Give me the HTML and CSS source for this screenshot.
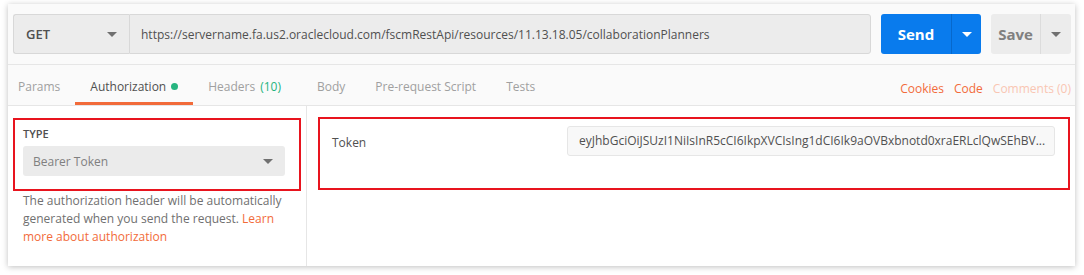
FILE: index.html
```html
<!DOCTYPE html>
<html lang="en">
<head>
  <meta charset="UTF-8" />
  <title>Request - Authorization</title>
  <link rel="stylesheet" href="styles.css">
</head>
<body>
  <div class="window">
    <div class="request-bar">
      <div class="method">
        <span>GET</span>
        <span class="caret"></span>
      </div>
      <div class="url">https://servername.fa.us2.oraclecloud.com/fscmRestApi/resources/11.13.18.05/collaborationPlanners</div>
      <div class="btn-group send">
        <span class="btn-label">Send</span>
        <span class="btn-caret"><span class="caret"></span></span>
      </div>
      <div class="btn-group save">
        <span class="btn-label">Save</span>
        <span class="btn-caret"><span class="caret"></span></span>
      </div>
    </div>

    <div class="tabs">
      <div class="tab">Params</div>
      <div class="tab active">Authorization <span class="dot"></span></div>
      <div class="tab headers">Headers <span class="count">(10)</span></div>
      <div class="tab">Body</div>
      <div class="tab">Pre-request Script</div>
      <div class="tab">Tests</div>
      <div class="tab-links">
        <span>Cookies</span>
        <span>Code</span>
        <span class="faded">Comments (0)</span>
      </div>
    </div>

    <div class="content">
      <div class="auth-left">
        <div class="highlight type-box">
          <div class="label">TYPE</div>
          <div class="select">
            <span>Bearer Token</span>
            <span class="caret"></span>
          </div>
        </div>
        <p class="help">The authorization header will be automatically generated when you send the request. <a href="#">Learn more about authorization</a></p>
      </div>
      <div class="auth-right">
        <div class="highlight token-box">
          <div class="token-label">Token</div>
          <div class="token-input">eyJhbGciOiJSUzI1NiIsInR5cCI6IkpXVCIsIng1dCI6Ik9aOVBxbnotd0xraERLclQwSEhBV...</div>
        </div>
      </div>
    </div>
  </div>
</body>
</html>
```

FILE: styles.css
```css
body {
  margin: 0;
  background: #fff;
  font-family: 'Open Sans', sans-serif;
  font-size: 12px;
  color: #505050;
}

.window {
  margin: 4px 9px 9px 8px;
  height: 262px;
  background: #fafafa;
  box-shadow: 0 1px 6px rgba(0, 0, 0, 0.25);
  display: flex;
  flex-direction: column;
}

.caret {
  display: inline-block;
  width: 0;
  height: 0;
  border-left: 5px solid transparent;
  border-right: 5px solid transparent;
  border-top: 5px solid #707070;
}

/* request bar */
.request-bar {
  display: flex;
  padding: 10px 4px 10px 5px;
  height: 40px;
  border-bottom: 1px solid #e6e6e6;
}

.method {
  width: 116px;
  display: flex;
  align-items: center;
  justify-content: space-between;
  padding: 0 12px;
  box-sizing: border-box;
  background: #ececec;
  border: 1px solid #d8d8d8;
  border-right: none;
  border-radius: 3px 0 0 3px;
  font-size: 13px;
  font-weight: 600;
  color: #505050;
}

.url {
  flex: 1;
  display: flex;
  align-items: center;
  padding: 0 11px;
  background: #ececec;
  border: 1px solid #d8d8d8;
  border-radius: 0 3px 3px 0;
  color: #505050;
  margin-right: 10px;
}

.btn-group {
  display: flex;
  border-radius: 3px;
  font-size: 15px;
  font-weight: 700;
}

.btn-label {
  display: flex;
  align-items: center;
  justify-content: center;
}

.btn-caret {
  display: flex;
  align-items: center;
  justify-content: center;
}

.send {
  width: 100px;
  background: #097bed;
  color: #fff;
  margin-right: 10px;
}

.send .btn-label {
  width: 70px;
  border-right: 1px solid #0668cc;
}

.send .btn-caret {
  flex: 1;
}

.send .caret {
  border-top-color: #fff;
}

.save {
  width: 80px;
  background: #ececec;
  color: #808080;
}

.save .btn-label {
  width: 49px;
  border-right: 1px solid #dcdcdc;
}

.save .btn-caret {
  flex: 1;
}

/* tabs */
.tabs {
  display: flex;
  align-items: stretch;
  height: 40px;
  padding-left: 10px;
  border-bottom: 1px solid #e6e6e6;
  font-size: 12px;
}

.tab {
  display: flex;
  align-items: center;
  gap: 5px;
  padding: 6px 15px 0;
  border-bottom: 3px solid transparent;
  color: #a0a0a0;
}

.tab:first-child {
  padding-left: 0;
}

.tab.headers {
  padding-right: 21px;
}

.tab.active {
  color: #505050;
  border-bottom-color: #f26b3a;
}

.dot {
  width: 7px;
  height: 7px;
  border-radius: 50%;
  background: #26b47f;
}

.count {
  color: #26b47f;
}

.tab-links {
  margin-left: auto;
  display: flex;
  align-items: center;
  gap: 10px;
  padding: 6px 4px 0 0;
  color: #f26b3a;
}

.tab-links .faded {
  color: #f9c6b3;
}

/* content */
.content {
  flex: 1;
  display: flex;
  background: #fff;
}

.auth-left {
  width: 299px;
  box-sizing: border-box;
  padding: 12px 5px 0;
  border-right: 1px solid #e6e6e6;
}

.highlight {
  border: 2px solid #e8141e;
  height: 73px;
  box-sizing: border-box;
}

.type-box {
  padding: 6px 14px 0 8px;
}

.label {
  font-size: 11px;
  font-weight: 600;
  color: #505050;
  margin-bottom: 5px;
}

.select {
  display: flex;
  align-items: center;
  justify-content: space-between;
  height: 30px;
  padding: 0 12px 0 10px;
  background: #ebebeb;
  border-radius: 3px;
  color: #808080;
  font-size: 12px;
}

.help {
  margin: 1px 0 0 10px;
  font-size: 12px;
  line-height: 18px;
  color: #707070;
  width: 270px;
}

.help a {
  color: #f26b3a;
  text-decoration: none;
}

.auth-right {
  flex: 1;
  padding: 11px 5px 0 11px;
}

.token-box {
  display: flex;
  align-items: flex-start;
  padding: 7px 13px 0 12px;
}

.token-label {
  flex: 1;
  padding-top: 2px;
  line-height: 30px;
  color: #505050;
}

.token-input {
  width: 488px;
  height: 30px;
  box-sizing: border-box;
  line-height: 28px;
  padding: 0 11px;
  background: #f8f8f8;
  border: 1px solid #e6e6e6;
  border-radius: 3px;
  color: #505050;
  white-space: nowrap;
  overflow: hidden;
}
```
